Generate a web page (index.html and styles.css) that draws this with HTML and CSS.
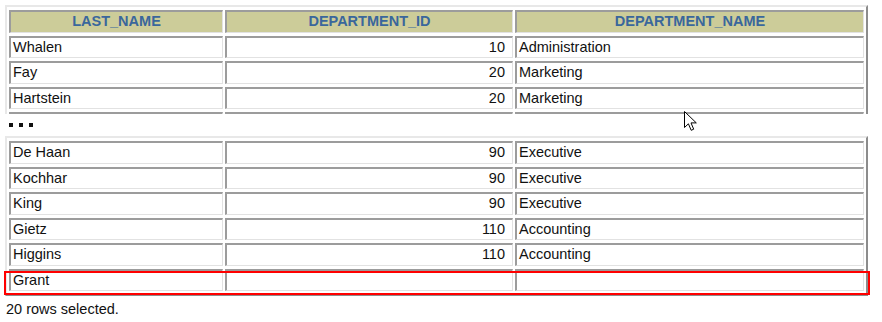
FILE: index.html
```html
<!DOCTYPE html>
<html lang="en">
<head>
    <meta charset="UTF-8" />
    <title>Employees and departments</title>
    <link rel="stylesheet" href="styles.css">
</head>
<body>
<div class="page">
    <!-- first rows of the result -->
    <div class="clip-top">
        <table class="grid">
            <colgroup>
                <col class="c-name">
                <col class="c-id">
                <col>
            </colgroup>
            <thead>
                <tr><th>LAST_NAME</th><th>DEPARTMENT_ID</th><th>DEPARTMENT_NAME</th></tr>
            </thead>
            <tbody>
                <tr><td>Whalen</td><td class="num">10</td><td>Administration</td></tr>
                <tr><td>Fay</td><td class="num">20</td><td>Marketing</td></tr>
                <tr><td>Hartstein</td><td class="num">20</td><td>Marketing</td></tr>
                <tr><td></td><td class="num"></td><td></td></tr>
            </tbody>
        </table>
    </div>

    <div class="gap">
        <span class="dot"></span><span class="dot"></span><span class="dot"></span>
    </div>

    <!-- last rows of the result -->
    <div class="tail">
        <table class="grid">
            <colgroup>
                <col class="c-name">
                <col class="c-id">
                <col>
            </colgroup>
            <tbody>
                <tr><td>De Haan</td><td class="num">90</td><td>Executive</td></tr>
                <tr><td>Kochhar</td><td class="num">90</td><td>Executive</td></tr>
                <tr><td>King</td><td class="num">90</td><td>Executive</td></tr>
                <tr><td>Gietz</td><td class="num">110</td><td>Accounting</td></tr>
                <tr><td>Higgins</td><td class="num">110</td><td>Accounting</td></tr>
                <tr><td>Grant</td><td class="num"></td><td></td></tr>
            </tbody>
        </table>
        <div class="mark"></div>
    </div>

    <p class="count">20 rows selected.</p>

    <svg class="cursor" width="14" height="21" viewBox="0 0 14 21">
        <path d="M0.5 0.5 L0.5 16.5 L4.4 12.8 L7.2 19.3 L9.7 18.2 L7 11.9 L12.3 11.9 Z"
              fill="#fff" stroke="#000" stroke-width="1" stroke-linejoin="miter"/>
    </svg>
</div>
</body>
</html>
```

FILE: styles.css
```css
body {
    margin: 0;
    background: #fff;
    font-family: "Liberation Sans", Arial, sans-serif;
    color: #111;
}

.page {
    position: relative;
    padding: 5px 0 0 5px;
    width: 863px;
}

.clip-top {
    height: 109px;
    overflow: hidden;
}

.grid {
    width: 863px;
    table-layout: fixed;
    border-spacing: 2px 3px;
    border: 2px solid;
    border-color: #e8e8e8 #8c8c8c #8c8c8c #e8e8e8;
    font-size: 14.5px;
}

.c-name { width: 214px; }
.c-id { width: 288px; }

.grid tr {
    height: 22.5px;
}

.grid th,
.grid td {
    padding: 0 2px;
    line-height: 17px;
    border-style: solid;
    border-width: 2px 1px 1px 2px;
    border-color: #9c9c9c #e2e2e2 #e2e2e2 #9c9c9c;
    white-space: nowrap;
    overflow: hidden;
}

.grid th {
    background: #cccc99;
    color: #3a679c;
    font-weight: bold;
    text-align: center;
}

.grid td {
    text-align: left;
}

.grid td.num {
    text-align: right;
    padding-right: 7px;
}

.gap {
    height: 22px;
    display: flex;
    align-items: center;
    gap: 6px;
    padding-left: 4px;
}

.dot {
    width: 4px;
    height: 4px;
    background: #111;
}

.tail {
    position: relative;
}

/* highlight around the last row */
.mark {
    position: absolute;
    left: -1px;
    right: -2px;
    bottom: 1px;
    height: 24px;
    box-sizing: border-box;
    border: 2px solid #ff0000;
}

.count {
    margin: 5px 0 0 1px;
    font-size: 14.5px;
    line-height: 17px;
}

.cursor {
    position: absolute;
    left: 684px;
    top: 111px;
}
```
